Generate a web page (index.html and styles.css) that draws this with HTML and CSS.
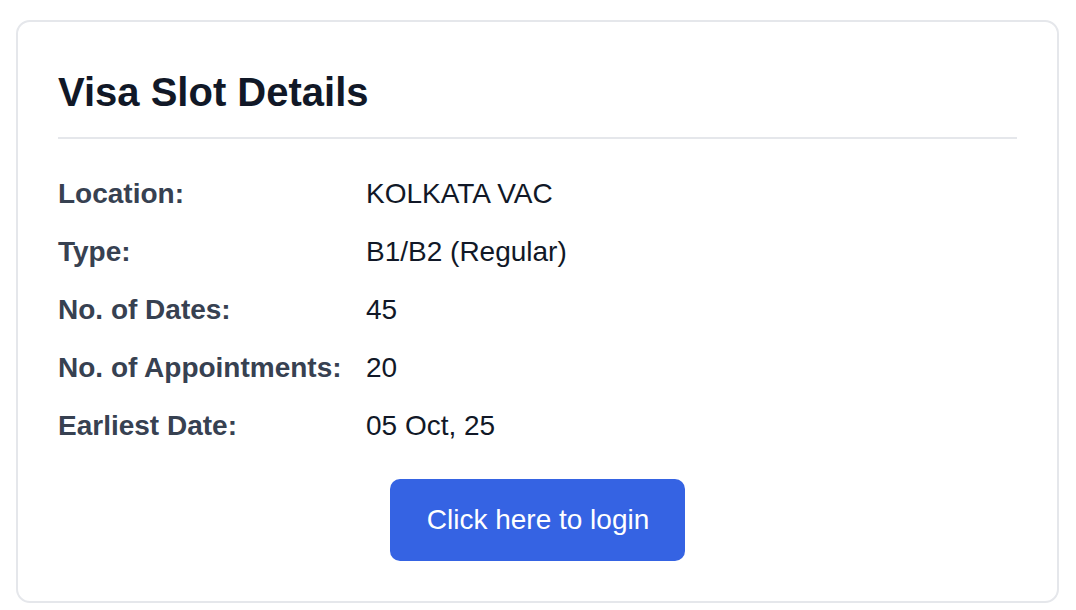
FILE: index.html
```html
<!DOCTYPE html>
<html lang="en">
<head>
    <meta charset="UTF-8">
    <meta name="viewport" content="width=device-width, initial-scale=1.0">
    <title>Visa Slot Details</title>
    <link rel="stylesheet" href="styles.css">
</head>
<body>
    <div class="slot-card">
        <h2 class="slot-title">Visa Slot Details</h2>

        <div class="slot-details">
            <div class="detail-row">
                <span class="detail-label">Location:</span>
                <span class="detail-value">KOLKATA VAC</span>
            </div>
            <div class="detail-row">
                <span class="detail-label">Type:</span>
                <span class="detail-value">B1/B2 (Regular)</span>
            </div>
            <div class="detail-row">
                <span class="detail-label">No. of Dates:</span>
                <span class="detail-value">45</span>
            </div>
            <div class="detail-row">
                <span class="detail-label">No. of Appointments:</span>
                <span class="detail-value">20</span>
            </div>
            <div class="detail-row">
                <span class="detail-label">Earliest Date:</span>
                <span class="detail-value">05 Oct, 25</span>
            </div>
        </div>

        <div class="action">
            <a href="#" class="login-button">Click here to login</a>
        </div>
    </div>
</body>
</html>
```

FILE: styles.css
```css
:root {
    /* Colors */
    --primary-blue: #3563e3;
    --primary-blue-hover: #2a50c0;
    --text-primary: #111827;
    --text-label: #374151;
    --border-color: #e5e7eb;

    /* Typography */
    --font-family-base: 'Liberation Sans', Arial, Helvetica, sans-serif;
    --font-size-md: 28px;
    --font-size-xl: 40px;

    /* Border radius */
    --radius-md: 10px;
    --radius-lg: 14px;
}

body {
    font-family: var(--font-family-base);
    color: var(--text-primary);
    background-color: white;
    margin: 0;
    padding: 20px 17px 7px 16px;
}

.slot-card {
    background-color: white;
    border: 2px solid var(--border-color);
    border-radius: var(--radius-lg);
    padding: 46px 40px 40px;
}

.slot-title {
    font-size: var(--font-size-xl);
    font-weight: bold;
    line-height: 48px;
    margin: 0 0 35px;
    padding-bottom: 21px;
    border-bottom: 2px solid var(--border-color);
    color: var(--text-primary);
}

.slot-details {
    display: flex;
    flex-direction: column;
    gap: 18px;
}

.detail-row {
    display: flex;
    font-size: var(--font-size-md);
    line-height: 40px;
}

.detail-label {
    width: 308px;
    flex-shrink: 0;
    font-weight: bold;
    color: var(--text-label);
}

.detail-value {
    color: var(--text-primary);
}

.action {
    display: flex;
    justify-content: center;
    margin-top: 33px;
}

.login-button {
    background-color: var(--primary-blue);
    color: white;
    border-radius: var(--radius-md);
    padding: 20px 36px 20px 37px;
    font-size: var(--font-size-md);
    line-height: 42px;
    text-decoration: none;
    display: inline-block;
}

.login-button:hover {
    background-color: var(--primary-blue-hover);
}
```
